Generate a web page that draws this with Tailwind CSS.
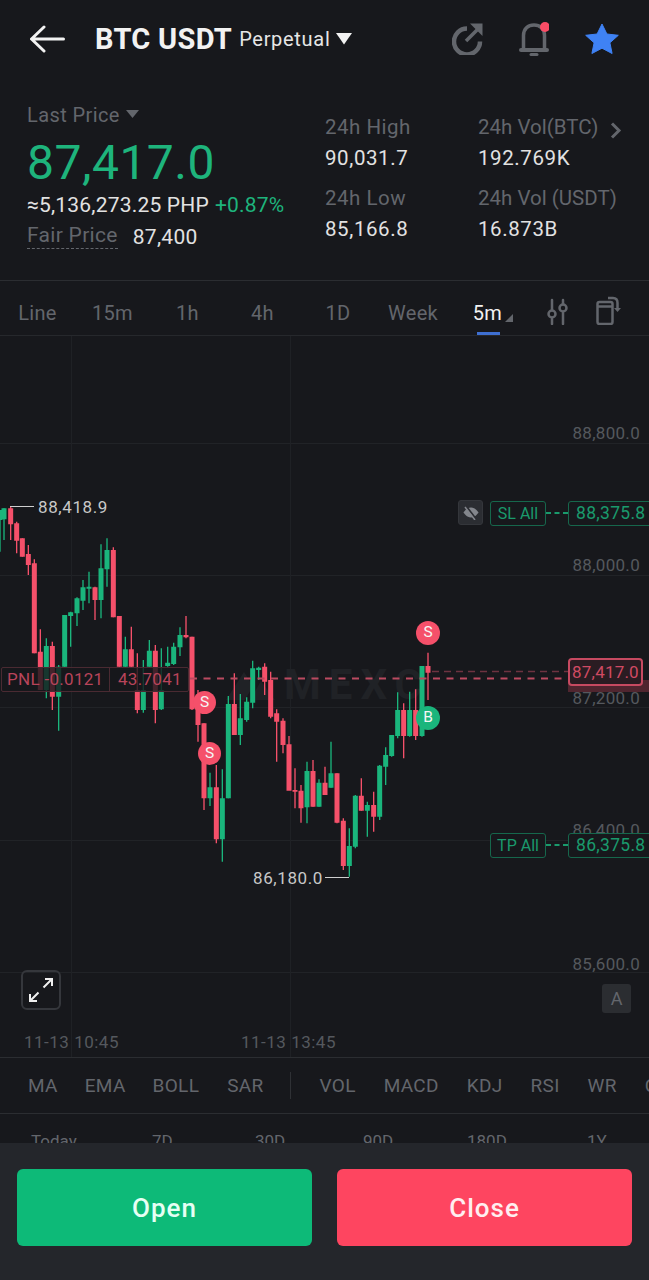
<!DOCTYPE html>
<html lang="en">
<head>
<meta charset="utf-8">
<script src="https://cdn.jsdelivr.net/npm/@tailwindcss/browser@4"></script>
<title>BTC USDT Perpetual</title>
</head>
<body class="bg-[#17181c]">
<div class="w-[649px] h-[1280px] overflow-hidden flex flex-col font-['Roboto',sans-serif] bg-[#17181c] relative">

  <!-- header -->
  <header class="h-[78px] shrink-0 flex items-center pl-[30px] pr-[30px]">
    <svg width="35" height="28" viewBox="0 0 35 28" fill="none" stroke="#f2f2f2" stroke-width="3" stroke-linecap="round" stroke-linejoin="round" class="mr-[30px]"><path d="M33.500 14H2M14 2 1.500 14 14 26"/></svg>
    <span class="text-[29px] leading-none font-bold text-[#f2f2f2] tracking-[0.3px]">BTC USDT</span>
    <span class="text-[20px] leading-none text-[#e6e6e6] ml-[7px] tracking-[0.7px]">Perpetual</span>
    <svg width="16" height="12" viewBox="0 0 16 12" class="ml-[6px]"><path d="M0 0h16L8 11.500z" fill="#f2f2f2"/></svg>
    <div class="ml-auto flex items-center gap-[36px]">
      <svg width="31" height="32" viewBox="0 0 31 32" fill="none" stroke="#63666c" stroke-width="4.500"><path d="M28 18.500A13 13 0 1 1 15 5.500"/><path d="M14 18 26 6" stroke-width="3.500"/><path d="M18 .5h12.500V13z" stroke-width="0" fill="#63666c"/></svg>
      <svg width="30" height="34" viewBox="0 0 30 34" fill="none"><path d="M4.500 27V13.500C4.500 7 9 3 15 3s10.500 4 10.500 10.500V27" stroke="#63666c" stroke-width="3.500"/><path d="M2 28h26" stroke="#63666c" stroke-width="4" stroke-linecap="round"/><path d="M12 32.500h6" stroke="#63666c" stroke-width="3" stroke-linecap="round"/><circle cx="26" cy="5" r="5" fill="#fb4c66"/></svg>
      <svg width="34" height="32" viewBox="0 0 34 32"><path d="M17 1l4.900 10 11.400 1.300-8.400 7.500 2.200 10.700L17 25.200 6.900 30.500l2.200-10.700L.7 12.300 12.100 11z" fill="#3f82f4" stroke="#3f82f4" stroke-width="1" stroke-linejoin="round"/></svg>
    </div>
  </header>

  <!-- stats -->
  <section class="h-[203px] shrink-0 flex border-b border-[#2b2d31] relative">
    <div class="w-[325px] shrink-0 pl-[27px] pt-[25px]">
      <div class="flex items-center h-[24px] text-[20px] leading-none text-[#63666c] tracking-[0.4px]">Last Price<svg width="13" height="8" viewBox="0 0 13 8" class="ml-[6px] -mt-[3px]"><path d="M0 0h13L6.500 8z" fill="#63666c"/></svg></div>
      <div class="h-[56px] mt-[8px] flex items-center text-[48px] leading-none text-[#1eb47c] tracking-[0.5px]">87,417.0</div>
      <div class="flex items-center h-[24px] mt-[2px] text-[21px] leading-none text-[#e2e2e2] whitespace-nowrap tracking-[0.2px]">≈5,136,273.25 PHP<span class="text-[#1eb47c] ml-[6px]">+0.87%</span></div>
      <div class="flex items-center h-[24px] mt-[8px] text-[21px] leading-none whitespace-nowrap tracking-[0.3px]"><span class="text-[#63666c] border-b border-dashed border-[#63666c] pb-[2px]">Fair Price</span><span class="text-[#e2e2e2] ml-[15px]">87,400</span></div>
    </div>
    <div class="w-[153px] shrink-0 pt-[37px]">
      <div class="text-[20.500px] leading-[24px] text-[#63666c] tracking-[0.5px]">24h High</div>
      <div class="text-[20.500px] leading-[24px] mt-[7px] text-[#e2e2e2] tracking-[0.6px]">90,031.7</div>
      <div class="text-[20.500px] leading-[24px] mt-[16px] text-[#63666c] tracking-[0.5px]">24h Low</div>
      <div class="text-[20.500px] leading-[24px] mt-[7px] text-[#e2e2e2] tracking-[0.6px]">85,166.8</div>
    </div>
    <div class="flex-1 pt-[37px] whitespace-nowrap">
      <div class="flex items-center text-[20.500px] leading-[24px] text-[#63666c]">24h Vol(BTC)<svg width="12" height="17" viewBox="0 0 12 17" fill="none" stroke="#63666c" stroke-width="3" class="ml-[12px] mt-[7px]"><path d="M2 1.500 9 8.500 2 15.500"/></svg></div>
      <div class="text-[20.500px] leading-[24px] mt-[7px] text-[#e2e2e2] tracking-[0.6px]">192.769K</div>
      <div class="text-[20.500px] leading-[24px] mt-[16px] text-[#63666c]">24h Vol (USDT)</div>
      <div class="text-[20.500px] leading-[24px] mt-[7px] text-[#e2e2e2] tracking-[0.6px]">16.873B</div>
    </div>
  </section>

  <!-- timeframes -->
  <nav class="h-[55px] shrink-0 flex items-center border-b border-[#26282c] text-[20px] leading-none text-[#63666c] relative tracking-[0.3px]">
    <span class="w-[75px] text-center pt-[9px]">Line</span>
    <span class="w-[75px] text-center pt-[9px]">15m</span>
    <span class="w-[75px] text-center pt-[9px]">1h</span>
    <span class="w-[75px] text-center pt-[9px]">4h</span>
    <span class="w-[76px] text-center pt-[9px]">1D</span>
    <span class="w-[74px] text-center pt-[9px]">Week</span>
    <span class="w-[75px] text-center text-[#f2f2f2] relative h-full flex items-center justify-center pt-[9px]">5m<svg width="8" height="8" viewBox="0 0 8 8" class="absolute left-[55px] top-[33px]"><path d="M8 0v8H0z" fill="#63666c"/></svg><span class="absolute left-[27px] bottom-0 w-[23px] h-[3px] bg-[#3e6fd1]"></span></span>
    <svg width="22" height="27" viewBox="0 0 22 27" fill="none" stroke="#63666c" stroke-width="2.500" stroke-linecap="round" class="ml-[22px] mt-[6px]"><path d="M5 2v9M5 21v5M16 2v4M16 15v11"/><circle cx="5" cy="16" r="3.500"/><circle cx="16" cy="10" r="3.500"/></svg>
    <svg width="25" height="29" viewBox="0 0 25 29" fill="none" stroke="#63666c" stroke-width="2.500" class="ml-[27px] mt-[4px]"><rect x="1.500" y="6" width="15" height="22" rx="2"/><path d="M1.500 10.500h15"/><path d="M12 2h5c3 0 4.500 2 4.500 5v7" stroke-width="2.500"/><path d="M18 12l3.500 4 3.500-4z" stroke-width="0" fill="#63666c"/></svg>
  </nav>

  <!-- chart -->
  <main class="h-[722px] shrink-0 relative overflow-hidden border-b border-[#2b2d31]">
    <div class="absolute left-0 right-0 top-[107px] h-px bg-[#212327]"></div>
    <div class="absolute left-0 right-0 top-[239px] h-px bg-[#212327]"></div>
    <div class="absolute left-0 right-0 top-[371px] h-px bg-[#212327]"></div>
    <div class="absolute left-0 right-0 top-[504px] h-px bg-[#212327]"></div>
    <div class="absolute left-0 right-0 top-[636px] h-px bg-[#212327]"></div>
    <div class="absolute top-0 bottom-0 left-[71px] w-px bg-[#1f2125]"></div>
    <div class="absolute top-0 bottom-0 left-[290px] w-px bg-[#1f2125]"></div>

    <!-- watermark -->
    <svg class="absolute left-[226px] top-[334px]" width="56" height="32" viewBox="0 0 56 32" fill="#202226"><path d="M0 30 18 2l9 14-8 14zM24 30l11-19 14 19z"/></svg>
    <div class="absolute left-[284px] top-[326px] text-[42px] leading-[46px] font-bold tracking-[8px] text-[#202226]">MEXC</div>

    <div class="absolute right-[9px] top-[87px] text-[17px] leading-[20px] text-[#55585e] tracking-[0.3px]">88,800.0</div>
    <div class="absolute right-[9px] top-[219px] text-[17px] leading-[20px] text-[#55585e] tracking-[0.3px]">88,000.0</div>
    <div class="absolute right-[9px] top-[352px] text-[17px] leading-[20px] text-[#55585e] tracking-[0.3px]">87,200.0</div>
    <div class="absolute right-[9px] top-[484px] text-[17px] leading-[20px] text-[#55585e] tracking-[0.3px]">86,400.0</div>
    <div class="absolute right-[9px] top-[618px] text-[17px] leading-[20px] text-[#55585e] tracking-[0.3px]">85,600.0</div>

    <!-- candles drawn at 3x -->
    <svg class="absolute left-0 top-[154px]" width="649" height="400" viewBox="0 0 1947 1200" fill="none">
      <path stroke="#1ab57c" stroke-width="4" d="M0 60V185M12 55V150M139 445V625M176 525V722M194 375V530M212 365V470M231 322V408M249 270V360M267 245V340M303 163V385M321 145V290M376 440V530M430 510V668M448 450V530M484 475V660M503 470V530M521 458V525M540 412V498M630 848V948M667 838V1115M685 618V925M721 612V765M740 622V695M758 512V655M776 530V570M921 815V1000M957 868V950M993 755V893M1048 1015V1160M1066 915V1075M1102 935V1040M1139 825V990M1157 772V885M1175 735V800M1193 607V745M1229 605V740M1266 528V740"/>
      <path stroke="#1ab57c" stroke-width="15" d="M0 60V90M12 55V88M139 468V600M176 530V620M194 375V530M212 367V378M231 325V370M249 292V332M267 290V296M303 235V330M321 180V238M376 478V530M430 600V660M448 482V530M484 600V658M503 518V528M521 470V522M540 435V472M630 892V925M667 925V1048M685 642V925M721 685V735M740 635V690M758 535V638M776 533V540M921 843V952M957 878V950M993 850V893M1048 1068V1128M1066 917V1070M1102 945V962M1139 827V980M1157 795V830M1175 735V798M1193 660V738M1229 660V738M1266 528V738"/>
      <path stroke="#f5506a" stroke-width="4" d="M32 50V150M50 95V190M67 145V200M85 165V255M103 208V490M121 418V600M157 455V660M285 290V390M340 172V382M358 378V530M394 410V530M412 490V670M466 465V700M558 378V445M576 440V660M594 600V755M612 700V960M649 825V1060M703 550V735M794 520V615M812 545V685M830 658V815M849 685V790M867 738V900M885 835V955M903 885V998M939 810V950M975 830V915M1011 850V1000M1030 985V1140M1084 865V962M1121 905V1025M1211 640V805M1247 598V750M1284 488V630"/>
      <path stroke="#f5506a" stroke-width="15" d="M32 55V103M50 100V152M67 145V200M85 192V225M103 220V490M121 485V600M157 468V620M285 292V330M340 180V382M358 378V530M394 478V530M412 600V660M466 482V660M558 435V442M576 440V658M594 640V705M612 700V925M649 892V1048M703 642V735M794 530V575M812 570V680M830 670V695M849 692V765M867 763V902M885 900V905M903 902V955M939 843V950M975 878V915M1011 850V998M1030 992V1128M1084 917V962M1121 945V980M1211 660V738M1247 660V738M1284 528V548"/>
    </svg>

    <!-- high / low marks -->
    <div class="absolute left-[10px] top-[170px] w-[24px] h-px bg-[#cfcfcf]"></div>
    <div class="absolute left-[38px] top-[161px] text-[17px] leading-[20px] text-[#c8c8c8] tracking-[0.6px]">88,418.9</div>
    <div class="absolute left-[325px] top-[541px] w-[24px] h-px bg-[#cfcfcf]"></div>
    <div class="absolute left-[253px] top-[532px] text-[17px] leading-[20px] text-[#c8c8c8] tracking-[0.6px]">86,180.0</div>

    <!-- PNL chip -->
    <div class="absolute left-[1px] top-[331px] h-[25px] w-[188px] flex rounded-[2px] border border-[#4a2a32] bg-[#17181c]/80 text-[17px] leading-[23px] text-[#b8445a] tracking-[0.3px]">
      <span class="w-[108px] border-r border-[#4a2a32] pl-[5px]">PNL -0.0121</span><span class="pl-[8px]">43.7041</span>
    </div>
    <!-- entry line + last price line + SL / TP leaders -->
    <svg class="absolute left-0 top-0" width="649" height="722" fill="none">
      <path d="M190 342.500H568" stroke="#bb4a60" stroke-width="2" stroke-dasharray="7 6.500"/>
      <path d="M432 335.500H568" stroke="#6d3340" stroke-width="1.500" stroke-dasharray="7 5"/>
      <path d="M546 177H568M546 509H568" stroke="#1a9a6c" stroke-width="2" stroke-dasharray="5 3.500"/>
    </svg>

    <!-- price tag -->
    <div class="absolute left-[568px] top-[344px] w-[81px] h-[12px] bg-[#fb4c66]/25"></div>
    <div class="absolute left-[568px] top-[322px] w-[75px] h-[28px] flex items-center justify-center rounded-[4px] border-2 border-[#c74a61] bg-[#2a1c22] text-[17px] leading-none text-[#d04a62] tracking-[0.2px]">87,417.0</div>

    <!-- SL / TP -->
    <div class="absolute left-[458px] top-[164px] w-[25px] h-[25px] rounded-[3px] border border-[#34363b] bg-[#2b2d32] flex items-center justify-center">
      <svg width="16" height="15" viewBox="0 0 16 15" fill="none"><path d="M.5 7.500S3.500 2.500 8 2.500s7.500 5 7.500 5-3 5-7.500 5-7.500-5-7.500-5z" fill="#83868c"/><path d="M3 1l10 13" stroke="#2b2d32" stroke-width="2"/><path d="M2 2l10 13" stroke="#83868c" stroke-width="1.500"/></svg>
    </div>
    <div class="absolute left-[490px] top-[165px] w-[56px] h-[25px] flex items-center justify-center rounded-[3px] border border-[#16674c] text-[16px] leading-none text-[#1a9a6c]">SL All</div>
    <div class="absolute left-[568px] top-[165px] w-[90px] h-[25px] flex items-center pl-[7px] rounded-[3px] border border-[#16674c] text-[17.500px] leading-none text-[#1a9a6c] tracking-[0.3px]">88,375.8</div>

    <div class="absolute left-[490px] top-[497px] w-[56px] h-[25px] flex items-center justify-center rounded-[3px] border border-[#16674c] bg-[#17181c] text-[16px] leading-none text-[#1a9a6c]">TP All</div>
    <div class="absolute left-[568px] top-[497px] w-[90px] h-[25px] flex items-center pl-[7px] rounded-[3px] border border-[#16674c] bg-[#17181c] text-[17.500px] leading-none text-[#1a9a6c] tracking-[0.3px]">86,375.8</div>

    <!-- trade markers -->
    <div class="absolute left-[193px] top-[355px] w-[23px] h-[23px] rounded-full bg-[#f5506a] flex items-center justify-center text-[15.500px] leading-none text-[#f5f5f5]">S</div>
    <div class="absolute left-[198px] top-[406px] w-[23px] h-[23px] rounded-full bg-[#f5506a] flex items-center justify-center text-[15.500px] leading-none text-[#f5f5f5]">S</div>
    <div class="absolute left-[416px] top-[285px] w-[24px] h-[24px] rounded-full bg-[#f5506a] flex items-center justify-center text-[15.500px] leading-none text-[#f5f5f5]">S</div>
    <div class="absolute left-[416px] top-[370px] w-[24px] h-[24px] rounded-full bg-[#1ab57c] flex items-center justify-center text-[15.500px] leading-none text-[#f5f5f5]">B</div>

    <!-- fullscreen + auto -->
    <div class="absolute left-[21px] top-[634px] w-[40px] h-[40px] rounded-[6px] border-2 border-[#35373c] flex items-center justify-center">
      <svg width="24" height="24" viewBox="0 0 24 24" fill="none" stroke="#f0f0f0" stroke-width="2"><path d="M14.500 9.500 23 1M16 1h7v7M9.500 14.500 1 23M1 16v7h7"/></svg>
    </div>
    <div class="absolute left-[602px] top-[648px] w-[29px] h-[29px] rounded-[3px] bg-[#2b2d31] flex items-center justify-center text-[18px] leading-none text-[#63666c]">A</div>

    <div class="absolute left-[24px] top-[697px] text-[17px] leading-[18px] text-[#55585e] tracking-[0.5px]">11-13 10:45</div>
    <div class="absolute left-[241px] top-[697px] text-[17px] leading-[18px] text-[#55585e] tracking-[0.5px]">11-13 13:45</div>
  </main>

  <!-- indicators -->
  <nav class="h-[56px] shrink-0 flex items-center border-b border-[#2b2d31] text-[19px] leading-none text-[#63666c] whitespace-nowrap pl-[28px] overflow-hidden tracking-[0.3px]">
    <span>MA</span><span class="ml-[27px]">EMA</span><span class="ml-[27px]">BOLL</span><span class="ml-[28px]">SAR</span>
    <span class="ml-[27px] w-px h-[27px] shrink-0 bg-[#2f3135]"></span>
    <span class="ml-[28px]">VOL</span><span class="ml-[28px]">MACD</span><span class="ml-[28px]">KDJ</span><span class="ml-[28px]">RSI</span><span class="ml-[28px]">WR</span><span class="ml-[28px]">CR</span>
  </nav>

  <!-- period row, clipped by the action bar -->
  <div class="flex-1 relative text-[17px] leading-none text-[#63666c]">
    <span class="absolute left-[31px] top-[19px]">Today</span>
    <span class="absolute left-[152px] top-[19px]">7D</span>
    <span class="absolute left-[255px] top-[19px]">30D</span>
    <span class="absolute left-[363px] top-[19px]">90D</span>
    <span class="absolute left-[467px] top-[19px]">180D</span>
    <span class="absolute left-[587px] top-[19px]">1Y</span>
  </div>

  <!-- actions -->
  <footer class="absolute left-0 right-0 bottom-0 h-[137px] bg-[#24262b] flex gap-[25px] pl-[17px] pr-[17px] pt-[26px]">
    <button class="flex-1 h-[77px] rounded-[6px] bg-[#0dba78] text-[26px] leading-none font-medium text-[#e6fff4] tracking-[1px]">Open</button>
    <button class="flex-1 h-[77px] rounded-[6px] bg-[#fe4560] text-[26px] leading-none font-medium text-[#ffeef0] tracking-[1px]">Close</button>
  </footer>
</div>
</body>
</html>
